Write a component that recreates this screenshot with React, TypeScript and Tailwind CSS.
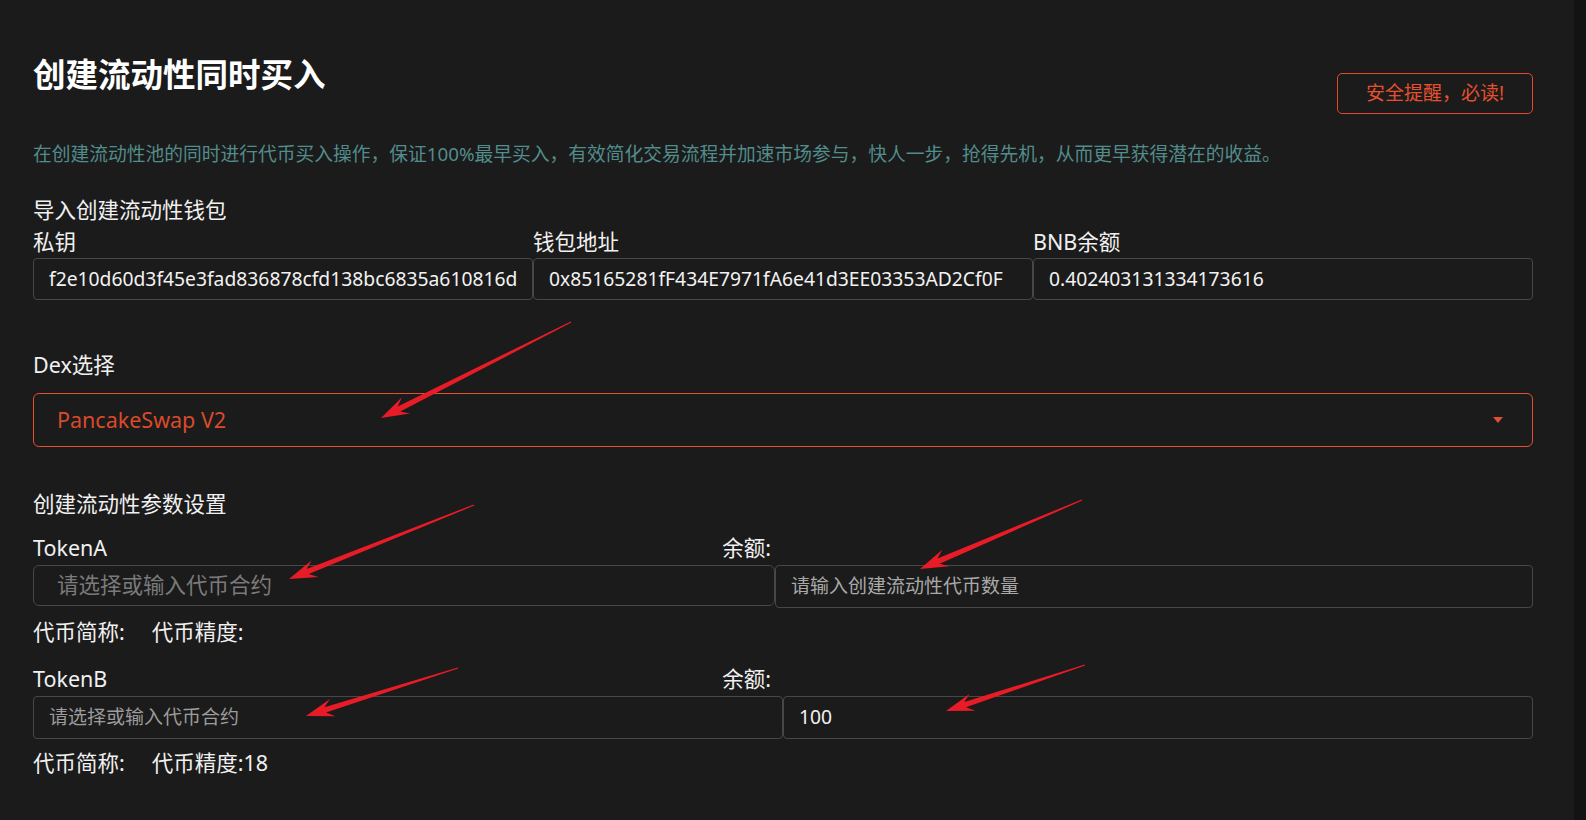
import React from 'react';

const arrows = [
  { x1: 571, y1: 322, x2: 381, y2: 418 },
  { x1: 474, y1: 505, x2: 289, y2: 579 },
  { x1: 1082, y1: 500, x2: 920, y2: 569 },
  { x1: 458, y1: 668, x2: 306, y2: 716 },
  { x1: 1085, y1: 665, x2: 946, y2: 711 },
];

// tapered shaft + notched head, like a screenshot-tool arrow
const arrowPoints = ({ x1, y1, x2, y2 }: { x1: number; y1: number; x2: number; y2: number }) => {
  const dx = x2 - x1;
  const dy = y2 - y1;
  const len = Math.hypot(dx, dy);
  const ux = dx / len;
  const uy = dy / len;
  const nx = -uy;
  const ny = ux;
  const L = 28;
  const W = 9;
  const pts: [number, number][] = [
    [x1 + nx * 0.6, y1 + ny * 0.6],
    [x2 - ux * L * 0.72 + nx * 2.8, y2 - uy * L * 0.72 + ny * 2.8],
    [x2 - ux * L + nx * W, y2 - uy * L + ny * W],
    [x2, y2],
    [x2 - ux * L - nx * W, y2 - uy * L - ny * W],
    [x2 - ux * L * 0.72 - nx * 2.8, y2 - uy * L * 0.72 - ny * 2.8],
    [x1 - nx * 0.6, y1 - ny * 0.6],
  ];
  return pts.map((p) => p.join(',')).join(' ');
};

const Label: React.FC<{ children: React.ReactNode; className?: string }> = ({ children, className = '' }) => (
  <div className={`text-[21.5px] leading-[32px] text-[#f0f0f0] ${className}`}>{children}</div>
);

const Box: React.FC<{ children: React.ReactNode; className?: string }> = ({ children, className = '' }) => (
  <div className={`flex items-center border border-[#474747] rounded-[4px] ${className}`}>{children}</div>
);

export default function App() {
  return (
    <div className="relative flex w-[1586px] h-[820px] bg-[#1b1b1b] font-['Noto_Sans','Noto_Sans_CJK_SC',sans-serif] overflow-hidden">
      <div className="w-[1574px] h-full pt-[48px]">
        <div className="ml-[33px] w-[1500px]">
          {/* header */}
          <div className="flex items-start justify-between">
            <h1 className="text-[32.5px] leading-[54px] font-bold text-white">创建流动性同时买入</h1>
            <button className="mt-[25px] w-[196px] h-[41px] border border-[#e0492c] rounded-[5px] text-[19px] text-[#e5502f]">
              安全提醒，必读!
            </button>
          </div>

          <p className="mt-[26px] text-[18.75px] leading-[28px] text-[#528c8c]">
            在创建流动性池的同时进行代币买入操作，保证100%最早买入，有效简化交易流程并加速市场参与，快人一步，抢得先机，从而更早获得潜在的收益。
          </p>

          {/* wallet */}
          <Label className="mt-[26px]">导入创建流动性钱包</Label>
          <div className="grid grid-cols-3">
            <div>
              <Label>私钥</Label>
              <Box className="h-[42px] px-[15px] text-[19.3px] text-[#f2f2f2]">f2e10d60d3f45e3fad836878cfd138bc6835a610816d</Box>
            </div>
            <div>
              <Label>钱包地址</Label>
              <Box className="h-[42px] px-[15px] text-[19.3px] text-[#f2f2f2]">0x85165281fF434E7971fA6e41d3EE03353AD2Cf0F</Box>
            </div>
            <div>
              <Label>BNB余额</Label>
              <Box className="h-[42px] px-[15px] text-[19.3px] text-[#f2f2f2]">0.402403131334173616</Box>
            </div>
          </div>

          {/* dex */}
          <Label className="mt-[49px]">Dex选择</Label>
          <div className="mt-[12px] h-[54px] flex items-center justify-between border border-[#e2502f] rounded-[6px] pl-[23px] pr-[29px]">
            <span className="text-[21.5px] text-[#d94a2b]">PancakeSwap V2</span>
            <svg width="10" height="6" viewBox="0 0 10 6">
              <path d="M0 0 H10 L5 6 Z" fill="#e0502f" />
            </svg>
          </div>

          {/* params */}
          <Label className="mt-[41px]">创建流动性参数设置</Label>

          <div className="mt-[12px] flex w-[738px] justify-between">
            <Label>TokenA</Label>
            <Label>余额:</Label>
          </div>
          <div className="mt-[1px] flex">
            <Box className="w-[742px] h-[41px] pl-[23px] rounded-[6px] text-[21.5px] text-[#7a7a7a]">请选择或输入代币合约</Box>
            <Box className="flex-1 h-[43px] px-[15px] text-[19px] text-[#a9a9a9]">请输入创建流动性代币数量</Box>
          </div>
          <div className="mt-[8px] flex">
            <Label>代币简称:</Label>
            <Label className="ml-[27px]">代币精度:</Label>
          </div>

          <div className="mt-[15px] flex w-[738px] justify-between">
            <Label>TokenB</Label>
            <Label>余额:</Label>
          </div>
          <div className="mt-[1px] grid grid-cols-2">
            <Box className="h-[43px] px-[15px] text-[19px] text-[#9c9c9c]">请选择或输入代币合约</Box>
            <Box className="h-[43px] px-[15px] text-[19.3px] text-[#f2f2f2]">100</Box>
          </div>
          <div className="mt-[8px] flex">
            <Label>代币简称:</Label>
            <Label className="ml-[27px]">代币精度:18</Label>
          </div>
        </div>
      </div>
      <div className="w-[12px] h-full bg-[#131313]" />

      {/* annotation arrows */}
      <svg className="absolute inset-0 pointer-events-none" width="1586" height="820">
        {arrows.map((a, i) => (
          <polygon key={i} points={arrowPoints(a)} fill="#e81c26" />
        ))}
      </svg>
    </div>
  );
}
